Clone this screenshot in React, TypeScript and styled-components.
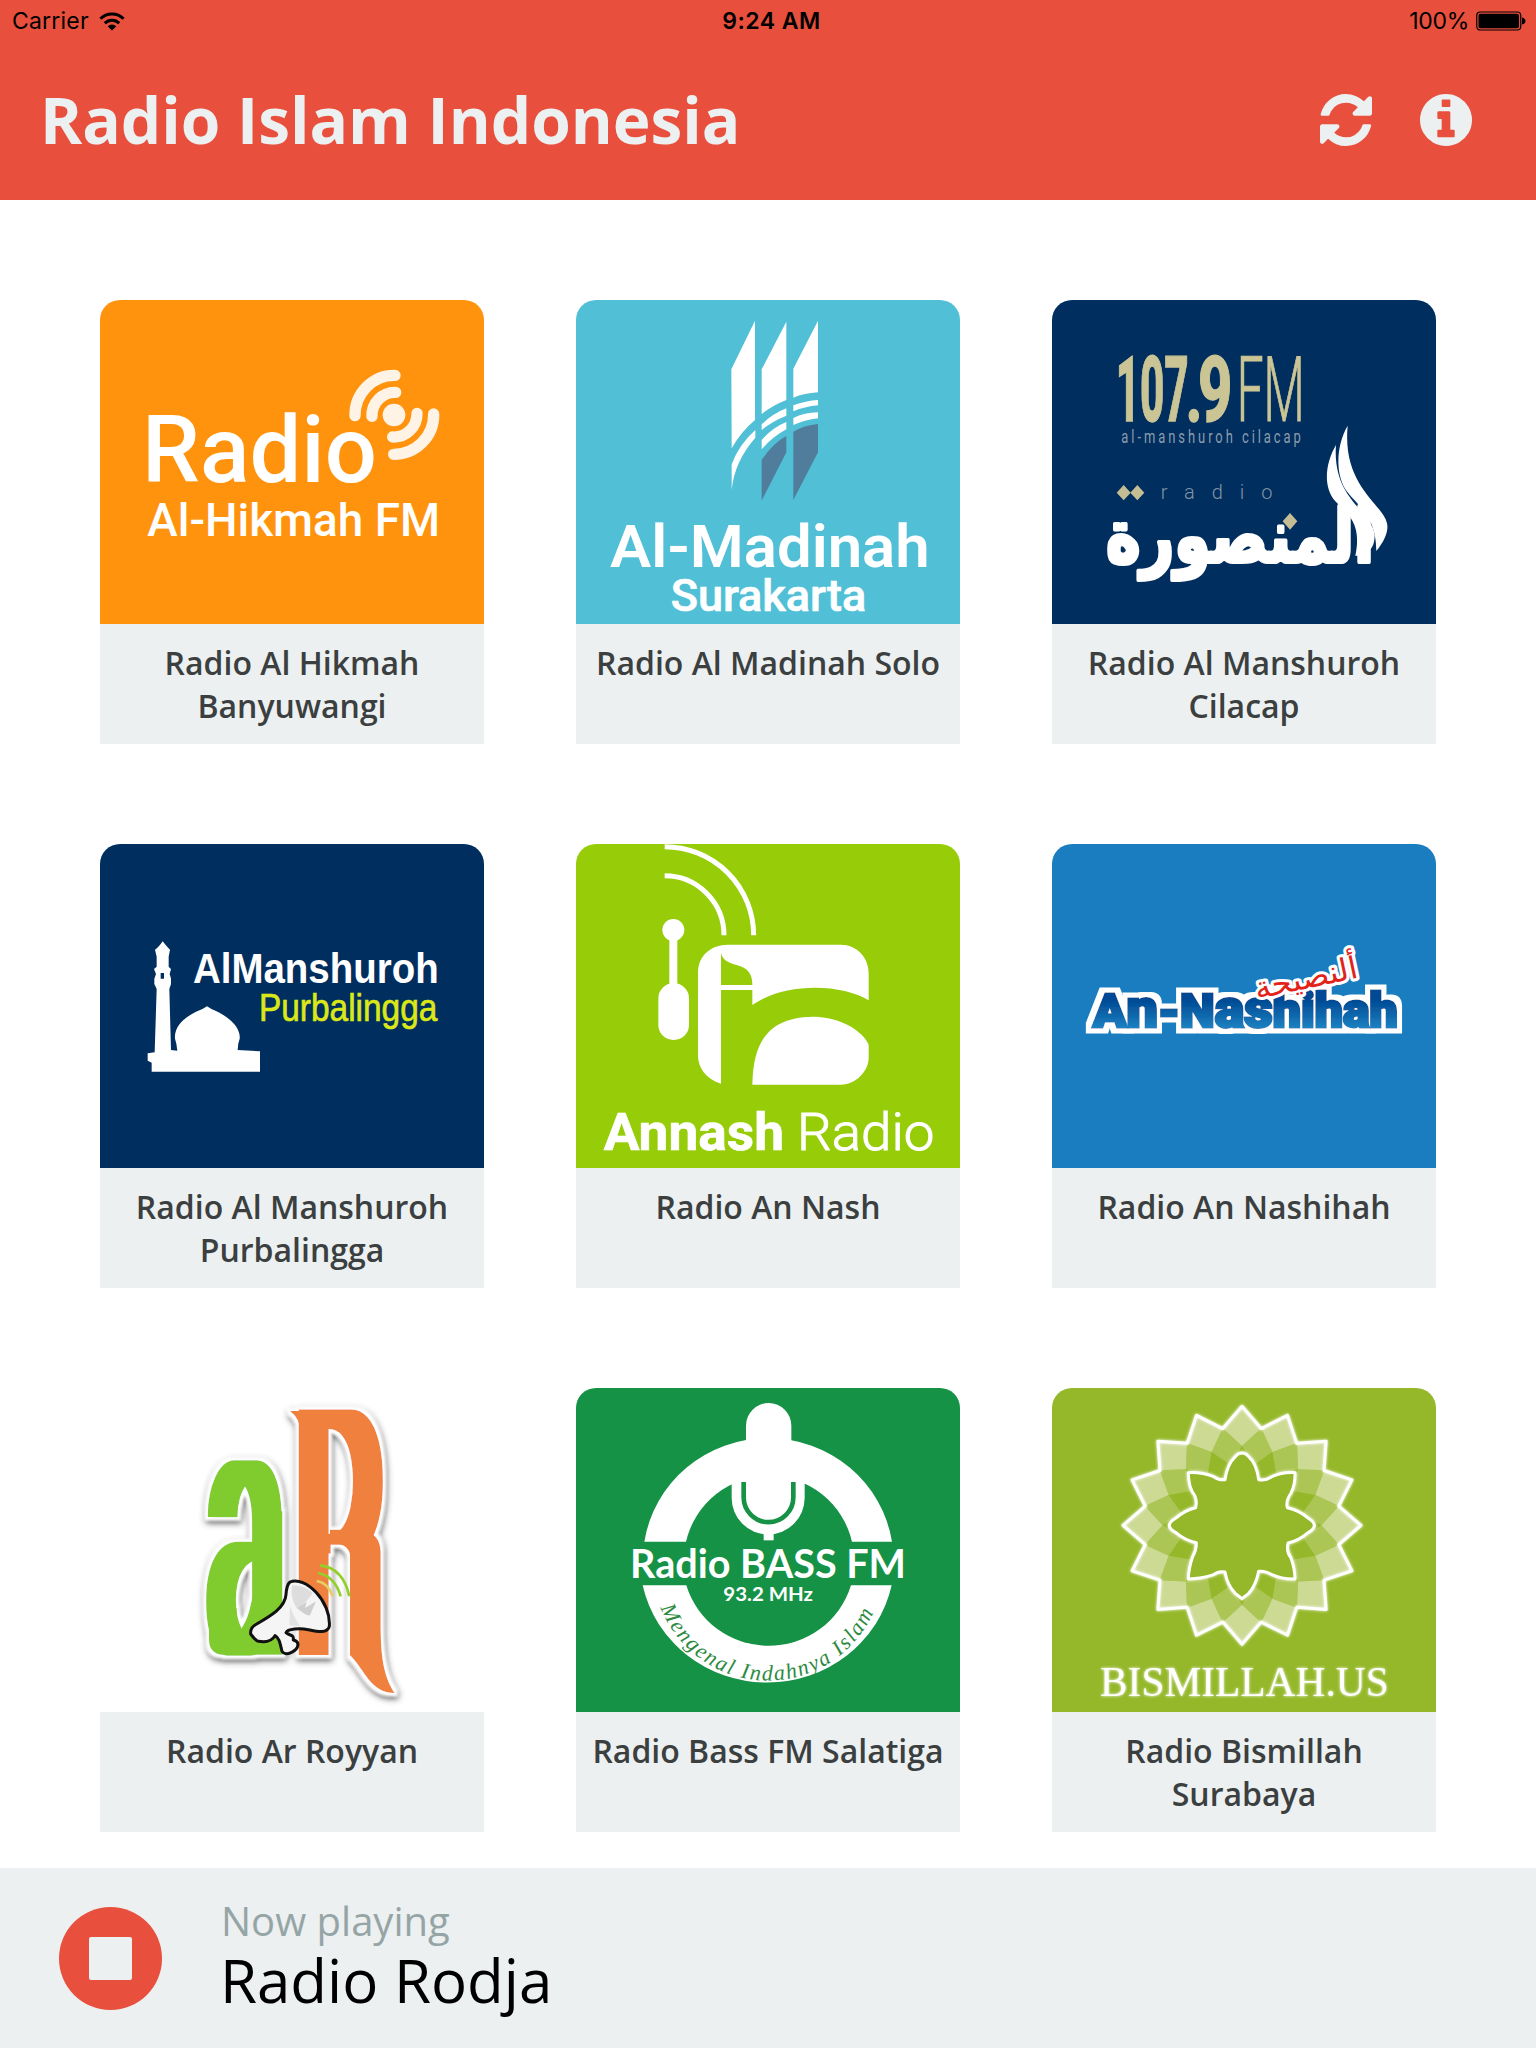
import React from "react";
import styled, { createGlobalStyle } from "styled-components";

const color = {
  red: "#e84f3d",
  cloud: "#ecf0f1",
  ink: "#3b3f40",
  muted: "#95a5a6",
};

const GlobalStyle = createGlobalStyle`
  * { box-sizing: border-box; }
  body { margin: 0; background: #fff; font-family: "Open Sans", sans-serif; }
`;

const Screen = styled.div`
  width: 1536px;
  height: 2048px;
  display: flex;
  flex-direction: column;
  overflow: hidden;
`;

const Header = styled.header`
  flex: 0 0 200px;
  background: ${color.red};
  display: flex;
  flex-direction: column;
`;

const StatusBar = styled.div`
  height: 40px;
  padding: 1px 10px 0 12px;
  display: grid;
  grid-template-columns: 1fr auto 1fr;
  align-items: center;
  font: 400 23px/40px Inter, sans-serif;
  color: #000;
`;

const StatusSide = styled.div<{ $end?: boolean }>`
  display: flex;
  align-items: center;
  justify-content: ${(p) => (p.$end ? "flex-end" : "flex-start")};
  gap: ${(p) => (p.$end ? "7px" : "10px")};
  letter-spacing: ${(p) => (p.$end ? "-0.3px" : "0.2px")};
`;

const Clock = styled.div`
  padding-left: 5px;
  font-weight: 600;
  letter-spacing: 0.5px;
`;

const TitleBar = styled.div`
  flex: 1;
  display: flex;
  align-items: center;
  justify-content: space-between;
  padding: 0 64px 0 40px;
`;

const Title = styled.h1`
  margin: 0;
  font-size: 64px;
  font-weight: 700;
  line-height: 88px;
  letter-spacing: -0.03px;
  color: ${color.cloud};
`;

const Actions = styled.div`
  display: flex;
  gap: 48px;
`;

const IconButton = styled.button`
  border: 0;
  padding: 0;
  background: none;
  display: block;
  width: 52px;
  height: 52px;
  color: ${color.cloud};
  svg { display: block; width: 52px; height: 52px; }
`;

const Stations = styled.main`
  flex: 1;
  display: grid;
  grid-template-columns: repeat(3, 384px);
  grid-auto-rows: 444px;
  gap: 100px 92px;
  padding: 100px 100px 0;
`;

const Card = styled.article`
  display: flex;
  flex-direction: column;
`;

const Cover = styled.svg<{ $bg: string }>`
  display: block;
  width: 384px;
  height: 324px;
  overflow: visible;
  border-radius: 20px 20px 0 0;
  background: ${(p) => p.$bg};
`;

const Name = styled.div`
  height: 120px;
  padding: 17px 10px 0;
  background: ${color.cloud};
  color: ${color.ink};
  font-size: 32px;
  font-weight: 600;
  line-height: 43px;
  text-align: center;
`;

const Player = styled.footer`
  flex: 0 0 180px;
  background: ${color.cloud};
  display: flex;
  align-items: center;
  padding: 0 59px;
  gap: 58px;
`;

const StopButton = styled.button`
  width: 103px;
  height: 103px;
  border: 0;
  padding: 0;
  border-radius: 50%;
  background: ${color.red};
  display: flex;
  align-items: center;
  justify-content: center;
`;

const StopSquare = styled.span`
  width: 43px;
  height: 43px;
  border-radius: 2px;
  background: ${color.cloud};
`;

const Track = styled.div`
  display: flex;
  flex-direction: column;
  padding-bottom: 10px;
`;

const Caption = styled.div`
  padding-left: 1px;
  font-size: 40px;
  line-height: 54px;
  color: ${color.muted};
`;

const Playing = styled.div`
  font-size: 60px;
  line-height: 65px;
  color: #000;
`;

type WordProps = {
  x: number;
  to: number;
  y: number;
  size: number;
  children: string;
  weight?: number;
  family?: string;
  fill?: string;
} & Omit<React.SVGProps<SVGTextElement>, "x" | "to" | "y" | "children">;

/* A word of a logo, fitted between two horizontal positions. */
const Word = ({ x, to, y, size, children, weight = 400, family = "Roboto", fill = "#fff", ...rest }: WordProps) => (
  <text
    x={x}
    y={y}
    fontSize={size}
    fontWeight={weight}
    fontFamily={`"${family}", sans-serif`}
    fill={fill}
    textLength={to - x}
    lengthAdjust="spacingAndGlyphs"
    {...rest}
  >
    {children}
  </text>
);

const polar = (r: number, deg: number) => {
  const a = ((deg - 90) * Math.PI) / 180;
  return `${(600 + r * Math.cos(a)).toFixed(1)},${(442 + r * Math.sin(a)).toFixed(1)}`;
};
const petals = Array.from({ length: 16 }, (_, i) => i * 22.5);

const HikmahLogo = () => (
  <>
    <Word x={156} to={861} y={577} size={277} weight={500}>Radio</Word>
    <Word x={172} to={1050} y={738} size={136} weight={500}>Al-Hikmah FM</Word>
    <g fill="none" stroke="#fff3e6" strokeWidth="34" strokeLinecap="round">
      <circle cx="912" cy="375" r="17" />
      <path d="M915 256A118 119 0 0 0 795 377" />
      <path d="M917 307A69 69 0 0 0 846 379" />
      <path d="M981 370A69 70 0 0 1 908 441" />
      <path d="M1031 372A119 119 0 0 1 911 493" />
    </g>
  </>
);

const MadinahLogo = () => (
  <>
    <g fill="#fff">
      <path d="M496 238L567 92V390Q525 425 497 475Z" />
      <path d="M587 238L661 95V330Q620 346 587 372Z" />
      <path d="M682 236L756 92V307Q715 310 682 323Z" />
      <path d="M497 523Q520 462 568 420V443Q505 515 497 600Z" />
      <path d="M587 403Q620 371 661 355V377Q620 393 587 420Z" />
      <path d="M682 346Q720 332 756 330V346Q715 350 682 364Z" />
      <path d="M587 450Q620 412 661 396V418Q620 440 587 478Z" />
      <path d="M682 384Q715 368 756 367V385Q715 390 682 405Z" />
    </g>
    <g fill="#507d9b">
      <path d="M587 510Q620 460 661 438V487L587 632Z" />
      <path d="M682 425Q715 406 756 402V487L682 630Z" />
    </g>
    <Word x={132} to={1091} y={830} size={180} weight={600}>Al-Madinah</Word>
    <Word x={314} to={901} y={962} size={134} weight={500} stroke="#fff" strokeWidth={2}>Surakarta</Word>
  </>
);

const CilacapLogo = () => (
  <>
    <g stroke="#cbc595" strokeWidth="4">
      <Word x={221} to={440} y={393} size={272} weight={800} fill="#cbc595">107</Word>
      <Word x={432} to={480} y={393} size={230} weight={900} fill="#cbc595">.</Word>
      <Word x={468} to={571} y={393} size={272} weight={800} fill="#cbc595">9</Word>
    </g>
    <Word x={584} to={788} y={394} size={272} weight={300} fill="#cbc595" stroke="#cbc595" strokeWidth={3}>FM</Word>
    <text
      transform="translate(238 459) scale(0.72 1)"
      fontSize="54"
      fontFamily="Roboto, sans-serif"
      fill="#8c9dad"
      textLength="748"
      lengthAdjust="spacing"
    >
      al-manshuroh cilacap
    </text>
    <text x="356" y="628" fontSize="60" fontWeight="300" fontFamily="Roboto, sans-serif" fill="#8294a6" letterSpacing="51">
      radio
    </text>
    <text
      x="594"
      y="817"
      fontSize="222"
      fontWeight="700"
      fontFamily='"DejaVu Sans", sans-serif'
      fill="#fff"
      stroke="#fff"
      strokeWidth="12"
      strokeLinejoin="round"
      textAnchor="middle"
      direction="rtl"
      textLength="804"
      lengthAdjust="spacingAndGlyphs"
    >
      المنصورة
    </text>
    <g fill="#fff">
      <path d="M917 407C880 470 880 560 916 606C950 650 1003 680 1003 783C1030 750 1040 720 1035 700C1022 640 900 590 917 407Z" />
      <path d="M882 465C850 520 842 590 880 634C920 675 960 700 940 798C985 792 998 770 998 735C990 660 870 630 882 465Z" />
    </g>
    <path
      fill="#c5bd93"
      d="M245 585L266 608L245 631L224 608ZM286 585L307 608L286 631L265 608ZM744 669L766 694L744 719L722 694Z"
    />
  </>
);

const PurbalinggaLogo = () => (
  <>
    <path
      fill="#fff"
      fillRule="evenodd"
      d="M218 322Q232 340 240 347L236 368V398L243 405L239 420L243 434V450L238 465L243 648L262 650Q260 628 255 614C251 570 300 540 325 530Q340 525 351 517Q362 525 378 531C415 548 453 580 449 614Q443 630 443 648L510 652V713H185V686L173 680V658L194 655L200 465L193 450V434L198 420L192 405L200 398V368L195 347Q206 340 218 322ZM212 417V434H222V417Z"
    />
    <Word x={309} to={1046} y={447} size={127} weight={700} family="Liberation Sans">AlManshuroh</Word>
    <Word x={507} to={1042} y={560} size={115} family="Liberation Sans" fill="#dbe818" stroke="#dbe818" strokeWidth={2}>Purbalingga</Word>
  </>
);

const AnnashLogo = () => (
  <>
    <g fill="none" stroke="#fff" strokeWidth="15">
      <path d="M296 38A267 266 0 0 1 563 304" />
      <path d="M296 125A178 179 0 0 1 474 304" />
    </g>
    <g fill="#fff" fillRule="evenodd">
      <circle cx="322" cy="288" r="33" />
      <path d="M310 300H334V470H310Z" />
      <rect x="277" y="448" width="92" height="170" rx="45" />
      <path d="M465 749C420 735 396 700 396 665V417C396 365 435 332 485 332H825C872 332 908 370 908 417V499C830 450 660 442 559 513V468H465ZM465 357V453H559C560 410 535 400 512 393C480 385 470 375 465 357Z" />
      <path d="M559 752C561 620 610 550 740 548C820 547 890 590 908 632V672C908 710 870 752 825 752Z" />
    </g>
    <Word x={113} to={654} y={948} size={155} weight={700} stroke="#fff" strokeWidth={2}>Annash</Word>
    <Word x={693} to={1105} y={948} size={155} weight={300} stroke="#fff" strokeWidth={3}>Radio</Word>
  </>
);

const NashihahLogo = () => (
  <>
    <defs>
      <linearGradient id="nashihah" x1="0" y1="478" x2="0" y2="580" gradientUnits="userSpaceOnUse">
        <stop offset="0.2" stopColor="#004a94" />
        <stop offset="1" stopColor="#1b80c0" />
      </linearGradient>
      <filter id="outline" x="60" y="400" width="1100" height="260" filterUnits="userSpaceOnUse">
        <feMorphology in="SourceAlpha" operator="dilate" radius="14" result="fat" />
        <feGaussianBlur in="fat" stdDeviation="1.500" result="edge" />
        <feFlood floodColor="#fff" />
        <feComposite in2="edge" operator="in" result="white" />
        <feMerge>
          <feMergeNode in="white" />
          <feMergeNode in="SourceGraphic" />
        </feMerge>
      </filter>
    </defs>
    <text
      x="153"
      y="579"
      fontSize="140"
      fontWeight="900"
      fontFamily="Roboto, sans-serif"
      fill="url(#nashihah)"
      stroke="url(#nashihah)"
      strokeWidth="9"
      textLength="914"
      lengthAdjust="spacingAndGlyphs"
      filter="url(#outline)"
    >
      A<tspan fontSize="158">n</tspan>-N<tspan fontSize="158">as</tspan>
      <tspan fontSize="142">hihah</tspan>
    </text>
    <text
      transform="translate(798 463) rotate(-12)"
      fontSize="92"
      fontFamily='"DejaVu Sans", sans-serif'
      fill="#e2231a"
      stroke="#fff"
      strokeWidth="18"
      strokeLinejoin="round"
      paintOrder="stroke"
      textAnchor="middle"
      direction="rtl"
      textLength="314"
      lengthAdjust="spacingAndGlyphs"
    >
      ألنصيحة
    </text>
  </>
);

const RoyyanLogo = () => (
  <>
    <defs>
      <filter id="emboss" x="250" y="40" width="760" height="960" filterUnits="userSpaceOnUse">
        <feMorphology in="SourceAlpha" operator="dilate" radius="10" result="rim" />
        <feGaussianBlur in="rim" stdDeviation="3" result="softRim" />
        <feFlood floodColor="#fff" />
        <feComposite in2="softRim" operator="in" result="white" />
        <feOffset in="rim" dx="2" dy="9" result="low" />
        <feGaussianBlur in="low" stdDeviation="10" result="blur" />
        <feFlood floodColor="#444" floodOpacity="0.85" />
        <feComposite in2="blur" operator="in" result="shade" />
        <feMerge>
          <feMergeNode in="shade" />
          <feMergeNode in="white" />
          <feMergeNode in="SourceGraphic" />
        </feMerge>
      </filter>
      <filter id="widen" x="250" y="40" width="760" height="960" filterUnits="userSpaceOnUse">
        <feMorphology operator="dilate" radius="32 2" />
        <feGaussianBlur stdDeviation="2" />
      </filter>
      <clipPath id="bowl">
        <path d="M560 60H900V500H722V860H560Z" />
      </clipPath>
    </defs>
    <g filter="url(#emboss)">
      <g filter="url(#widen)">
        <text transform="translate(362 820) scale(3.950 10.600)" fontSize="100" fontWeight="300" fontFamily="Roboto, sans-serif" fill="#80cc2f">a</text>
      </g>
      <path fill="#80cc2f" d="M357 690H440V738Q445 755 465 755Q488 755 490 738V400H577V830H395Q357 825 357 785Z" />
      <g clipPath="url(#bowl)">
        <g filter="url(#widen)">
          <text transform="translate(624 828) scale(3.950 10.280)" fontSize="100" fontWeight="300" fontFamily="Roboto, sans-serif" fill="#ef803c">R</text>
        </g>
      </g>
      <g fill="#ef803c">
        <path d="M600 99H680V190H632V165Q630 120 600 99Z" />
        <path d="M720 455H822Q870 470 872 520V740C872 830 880 895 914 945C840 945 825 875 780 832V530Q775 496 720 494Z" />
      </g>
    </g>
    <g fill="none" stroke="#93cf2b" strokeWidth="8">
      <path d="M690 562Q760 570 778 655" />
      <path d="M684 585Q735 595 752 655" />
      <path d="M680 609Q715 615 728 655" stroke="#e5cd68" />
    </g>
    <path
      fill="#f5f5f5"
      stroke="#111"
      strokeWidth="9"
      strokeLinejoin="round"
      d="M600 612C645 592 724 670 718 745C712 768 680 760 655 755C630 750 592 752 588 764C600 775 612 768 610 786C630 790 628 812 605 823C595 830 580 828 576 820C570 795 568 780 555 773C545 792 525 793 505 790Q497 788 482 768C480 750 492 742 500 738C540 715 585 690 588 650Q590 620 600 612Z"
    />
    <path fill="#ddd" d="M606 622Q600 660 620 690Q650 675 668 645Q640 620 606 622Z" />
    <path fill="#cfcfcf" d="M620 690L650 672L645 690L678 670L660 712Q650 715 620 690Z" />
    <path fill="#e2e2e2" d="M600 685Q610 715 630 745L598 742Z" />
  </>
);

const BassLogo = () => (
  <>
    <defs>
      <path id="motto" d="M262 600A346 345 0 0 0 950 600" />
    </defs>
    <path
      fill="#fff"
      fillRule="evenodd"
      d="M235 491A376 367 0 0 1 978 491H858A255.500 255 0 0 0 360 491ZM230 622H361A258 255 0 0 0 855 622H977A382 369 0 0 1 230 622Z"
    />
    <g fill="#fff">
      <path d="M497 270H716V360A109.500 109.500 0 0 1 497 360Z" />
      <path d="M540 220V143A68 68 0 0 1 676 143V220Z" />
      <path d="M593 460H623V487H593Z" />
    </g>
    <path fill="none" stroke="#159245" strokeWidth="14" d="M533 312V358A74.500 74.500 0 0 0 682 358V312" />
    <Word x={192} to={1020} y={600} size={119} weight={700} family="Lato">Radio BASS FM</Word>
    <Word x={472} to={741} y={668} size={59} weight={700} family="Lato">93.2 MHz</Word>
    <text fontFamily='"Liberation Serif", serif' fontStyle="italic" fontSize="66" fill="#2b8a3e">
      <textPath href="#motto" startOffset="92" textLength="812" lengthAdjust="spacing">
        Mengenal Indahnya Islam
      </textPath>
    </text>
  </>
);

const BismillahLogo = () => {
  const outer = petals.map((a) => `${polar(357, a)} ${polar(296, a + 11.25)}`).join(" ");
  return (
    <>
      <defs>
        <filter id="glow" x="100" y="30" width="1000" height="970" filterUnits="userSpaceOnUse">
          <feGaussianBlur stdDeviation="5" result="b" />
          <feMerge>
            <feMergeNode in="b" />
            <feMergeNode in="SourceGraphic" />
          </feMerge>
        </filter>
      </defs>
      <polygon points={outer} fill="#94b829" />
      {petals.map((a) => (
        <polygon
          key={`m${a}`}
          fill="#acc655"
          points={`${polar(297, a + 11.25)} ${polar(238, a)} ${polar(185, a + 11.25)} ${polar(238, a + 22.5)}`}
        />
      ))}
      {petals.map((a) => (
        <polygon key={`o${a}`} fill="#ccda94" points={`${polar(357, a)} ${polar(297, a + 11.25)} ${polar(238, a)} ${polar(297, a - 11.25)}`} />
      ))}
      <g filter="url(#glow)" stroke="#fff" strokeWidth="9" strokeLinejoin="round">
        <polygon points={outer} fill="none" />
        <path
          fill="#94b829"
          d="M600 225Q588 225 580 236Q556 258 549 305Q530 307 515 296Q478 282 439 284Q440 330 458 352Q466 370 461 389Q430 396 402 420Q382 432 382 442Q382 454 402 464Q430 488 463 494Q464 515 452 536Q440 570 439 603Q480 602 515 590Q530 578 549 582Q556 622 580 646L600 662L620 646Q642 622 650 580Q668 577 690 590Q720 604 759 603Q758 570 747 540Q732 520 738 495Q770 488 798 464Q817 454 817 442Q817 432 798 420Q770 396 736 389Q730 370 747 345Q760 320 759 284Q720 282 690 296Q670 309 650 305Q644 258 620 236Q612 225 600 225Z"
        />
      </g>
      <Word x={174} to={1040} y={955} size={125} family="Liberation Serif" filter="url(#glow)">BISMILLAH.US</Word>
    </>
  );
};

const stations = [
  { name: "Radio Al Hikmah Banyuwangi", bg: "#ff930d", Logo: HikmahLogo },
  { name: "Radio Al Madinah Solo", bg: "#51bfd6", Logo: MadinahLogo },
  { name: "Radio Al Manshuroh Cilacap", bg: "#002e5e", Logo: CilacapLogo },
  { name: "Radio Al Manshuroh Purbalingga", bg: "#002e5e", Logo: PurbalinggaLogo },
  { name: "Radio An Nash", bg: "#96cc08", Logo: AnnashLogo },
  { name: "Radio An Nashihah", bg: "#197dbf", Logo: NashihahLogo },
  { name: "Radio Ar Royyan", bg: "#ffffff", Logo: RoyyanLogo },
  { name: "Radio Bass FM Salatiga", bg: "#159245", Logo: BassLogo },
  { name: "Radio Bismillah Surabaya", bg: "#94b829", Logo: BismillahLogo },
];

const Wifi = () => (
  <svg width="26" height="19" viewBox="0 0 26 19">
    <g fill="none" stroke="#000" strokeWidth="3">
      <path d="M1.400 6.800A16.500 16.500 0 0 1 24.600 6.800" />
      <path d="M5.800 11.200A10.300 10.300 0 0 1 20.200 11.200" />
    </g>
    <path d="M13 18.500L8.700 14.200A6.200 6.200 0 0 1 17.300 14.200Z" />
  </svg>
);

const Battery = () => (
  <svg width="50" height="20" viewBox="0 0 50 20">
    <rect x="0.750" y="1" width="44" height="18" rx="3.500" fill="none" stroke="#000" strokeWidth="1.200" />
    <rect x="2.500" y="2.800" width="40.500" height="14.400" rx="2" />
    <path d="M46 6.500Q49.500 7.500 49.500 10T46 13.500Z" />
  </svg>
);

const Refresh = () => (
  <svg viewBox="128 128 1536 1536" fill="currentColor">
    <path d="M1639 1056q0 5-1 7-64 268-268 434.500t-478 166.500q-146 0-282.500-55t-243.500-157l-129 129q-19 19-45 19t-45-19-19-45v-448q0-26 19-45t45-19h448q26 0 45 19t19 45-19 45l-137 137q71 66 161 102t187 36q134 0 250-65t186-179q11-17 53-117 8-23 30-23h192q13 0 22.500 9.500t9.500 22.500zm25-800v448q0 26-19 45t-45 19h-448q-26 0-45-19t-19-45 19-45l138-138q-148-137-349-137-134 0-250 65t-186 179q-11 17-53 117-8 23-30 23h-199q-13 0-22.500-9.500t-9.500-22.500v-7q65-268 270-434.500t480-166.500q146 0 284 55.500t245 156.500l130-129q19-19 45-19t45 19 19 45z" />
  </svg>
);

const Info = () => (
  <svg viewBox="128 128 1536 1536" fill="currentColor">
    <path d="M1152 1376v-160q0-14-9-23t-23-9h-96v-512q0-14-9-23t-23-9h-320q-14 0-23 9t-9 23v160q0 14 9 23t23 9h96v320h-96q-14 0-23 9t-9 23v160q0 14 9 23t23 9h448q14 0 23-9t9-23zm-128-896v-160q0-14-9-23t-23-9h-192q-14 0-23 9t-9 23v160q0 14 9 23t23 9h192q14 0 23-9t9-23zm640 416q0 209-103 385.500t-279.500 279.500-385.500 103-385.500-103-279.500-279.500-103-385.500 103-385.500 279.500-279.500 385.500-103 385.500 103 279.500 279.500 103 385.500z" />
  </svg>
);

export default function App() {
  return (
    <Screen>
      <GlobalStyle />
      <Header>
        <StatusBar>
          <StatusSide>
            <span>Carrier</span>
            <Wifi />
          </StatusSide>
          <Clock>9:24 AM</Clock>
          <StatusSide $end>
            <span>100%</span>
            <Battery />
          </StatusSide>
        </StatusBar>
        <TitleBar>
          <Title>Radio Islam Indonesia</Title>
          <Actions>
            <IconButton aria-label="Refresh">
              <Refresh />
            </IconButton>
            <IconButton aria-label="Info">
              <Info />
            </IconButton>
          </Actions>
        </TitleBar>
      </Header>
      <Stations>
        {stations.map(({ name, bg, Logo }) => (
          <Card key={name}>
            <Cover $bg={bg} viewBox="30 30 1152 972">
              <Logo />
            </Cover>
            <Name>{name}</Name>
          </Card>
        ))}
      </Stations>
      <Player>
        <StopButton aria-label="Stop">
          <StopSquare />
        </StopButton>
        <Track>
          <Caption>Now playing</Caption>
          <Playing>Radio Rodja</Playing>
        </Track>
      </Player>
    </Screen>
  );
}
